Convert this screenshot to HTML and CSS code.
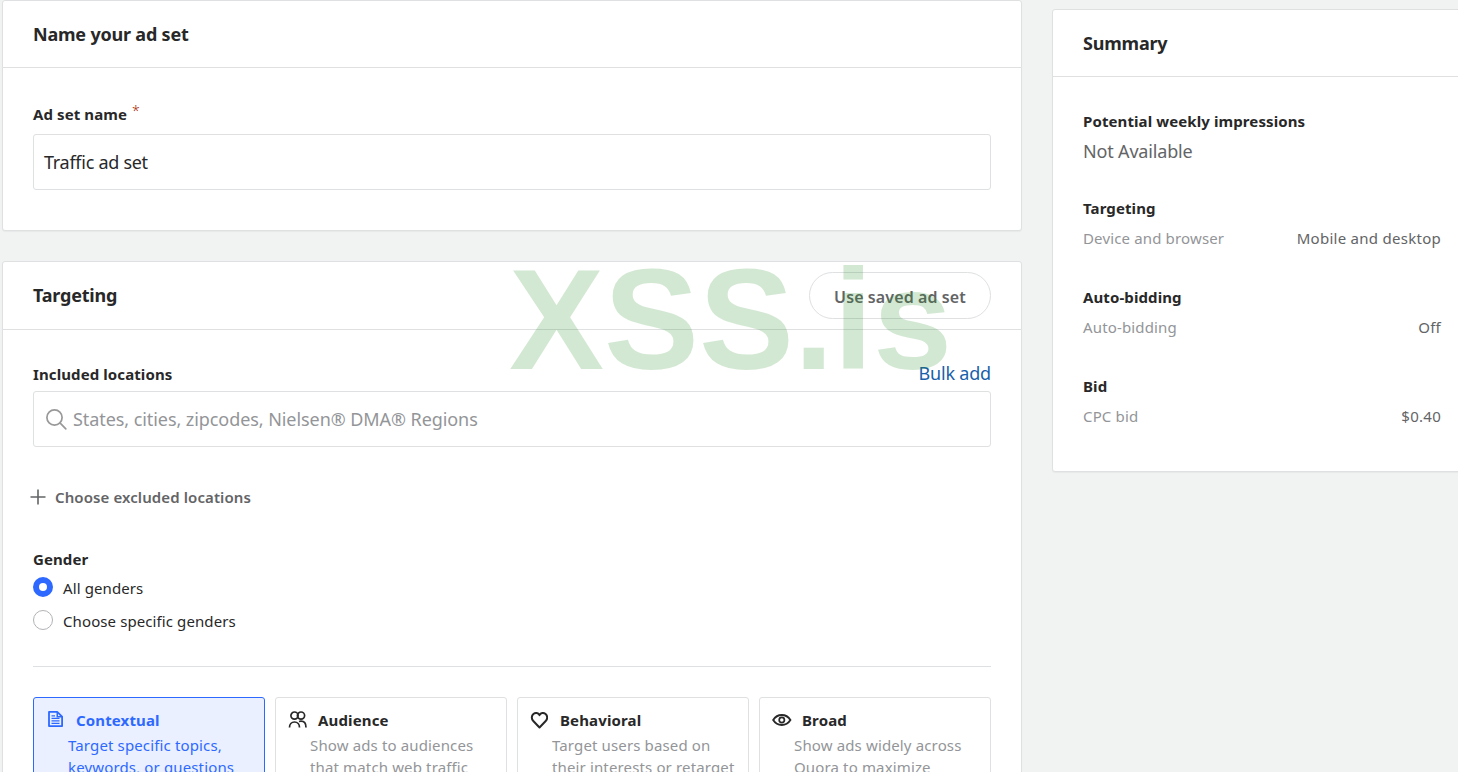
FILE: index.html
```html
<!DOCTYPE html>
<html lang="en">
<head>
<meta charset="utf-8">
<title>Ad set</title>
<link rel="stylesheet" href="styles.css">
</head>
<body>
<div class="page">
  <main class="main">
    <section class="card card-name">
      <header class="card-head"><h2>Name your ad set</h2></header>
      <div class="card-body name-body">
        <div class="label-row"><span class="label">Ad set name</span><span class="req">*</span></div>
        <div class="field"><span class="value">Traffic ad set</span></div>
      </div>
    </section>
    <section class="card card-target">
      <header class="card-head target-head"><h2>Targeting</h2><button class="pill">Use saved ad set</button></header>
      <div class="card-body target-body">
        <div class="label-split"><span class="label">Included locations</span><a class="link">Bulk add</a></div>
        <div class="field">
          <svg class="search" width="24" height="24" viewBox="0 0 24 24" fill="none" stroke="#999" stroke-width="1.7" stroke-linecap="round"><circle cx="10.500" cy="10.500" r="7.600"/><path d="M16.200 16.200l5.600 5.600"/></svg>
          <span class="placeholder">States, cities, zipcodes, Nielsen® DMA® Regions</span>
        </div>
        <div class="exclude">
          <svg width="16" height="16" viewBox="0 0 16 16" stroke="#636466" stroke-width="1.6"><path d="M8 .5v15M.5 8h15"/></svg>
          <span>Choose excluded locations</span>
        </div>
        <div class="label gender-label">Gender</div>
        <div class="radio-row"><span class="radio on"></span><span class="radio-text">All genders</span></div>
        <div class="radio-row"><span class="radio"></span><span class="radio-text">Choose specific genders</span></div>
        <hr class="rule">
        <div class="types">
          <div class="type active">
            <div class="type-head"><svg width="18" height="18" viewBox="0 0 18 18" fill="none" stroke="#2e69ff"><path stroke-width="1.800" stroke-linejoin="round" d="M3 .9h8.200l4.900 4.700v9.500H3z"/><path stroke-width="1.300" d="M5.500 4.800h3.500M5.500 7.300h8M5.500 9.800h8M5.500 12.300h8"/><path fill="#2e69ff" stroke="none" d="M10.500 1h1.500v4h4v1.500h-5.500z"/></svg><span>Contextual</span></div>
            <p>Target specific topics, keywords, or questions</p>
          </div>
          <div class="type">
            <div class="type-head"><svg width="18" height="18" viewBox="0 0 18 18" fill="none" stroke="#282829" stroke-width="1.700" class="icon-out"><circle cx="6.500" cy="4.600" r="3.600"/><circle cx="13" cy="4.600" r="3.600"/><path d="M1.500 16.500c0-3 2-5.500 5-5.500s5 2.500 5 5.500M11 10.500c.7-.2 1.300-.3 2-.3 3 0 5 2.500 5 6.300"/></svg><span>Audience</span></div>
            <p>Show ads to audiences that match web traffic</p>
          </div>
          <div class="type">
            <div class="type-head"><svg width="18" height="18" viewBox="0 0 18 18" fill="none" stroke="#282829" stroke-width="2"><path stroke-linejoin="round" d="M9.500 16.500 3.300 10C1.200 7.900 1.400 4.700 3.400 3c2-1.600 4.800-1.200 6.100 1.100C10.800 1.800 13.600 1.400 15.600 3c2 1.700 2.200 4.900.1 7z"/></svg><span>Behavioral</span></div>
            <p>Target users based on their interests or retarget</p>
          </div>
          <div class="type">
            <div class="type-head tight"><svg width="20" height="18" viewBox="0 0 20 18" fill="none" stroke="#282829" stroke-width="1.900"><path d="M1.200 9C3.200 5.800 6.200 4 9.800 4s6.600 1.800 8.600 5c-2 3.200-5 5-8.600 5S3.200 12.200 1.200 9z"/><circle cx="9.800" cy="9" r="2.600" stroke-width="1.700"/></svg><span>Broad</span></div>
            <p>Show ads widely across Quora to maximize</p>
          </div>
        </div>
      </div>
    </section>
  </main>
  <aside class="card summary">
    <header class="card-head"><h2>Summary</h2></header>
    <div class="summary-body">
      <div class="sum-group first">
        <div class="label">Potential weekly impressions</div>
        <div class="big">Not Available</div>
      </div>
      <div class="sum-group">
        <div class="label">Targeting</div>
        <div class="sum-row"><span class="key">Device and browser</span><span class="val">Mobile and desktop</span></div>
      </div>
      <div class="sum-group">
        <div class="label">Auto-bidding</div>
        <div class="sum-row"><span class="key">Auto-bidding</span><span class="val">Off</span></div>
      </div>
      <div class="sum-group">
        <div class="label">Bid</div>
        <div class="sum-row"><span class="key">CPC bid</span><span class="val">$0.40</span></div>
      </div>
    </div>
  </aside>
</div>
<div class="watermark">XSS.is</div>
</body>
</html>
```

FILE: styles.css
```css
* { box-sizing: border-box; }
html, body { height: 100%; }
body {
  margin: 0;
  height: 772px;
  overflow: hidden;
  background: #f1f2f2;
  color: #282829;
  font-family: "Noto Sans", "Open Sans", sans-serif;
  font-size: 15px;
  position: relative;
}
.page {
  display: flex;
  gap: 30px;
  padding-left: 2px;
  width: 1480px;
  height: 772px;
  overflow: hidden;
  align-items: flex-start;
}
.main { width: 1020px; flex: none; display: flex; flex-direction: column; gap: 30px; }
.card {
  background: #fff;
  border: 1px solid #dee0e1;
  border-radius: 3px;
  box-shadow: 0 1px 1px rgba(0,0,0,.04);
}
.card-name { height: 231px; }
.card-head {
  height: 67px;
  padding: 0 30px;
  display: flex;
  align-items: center;
  justify-content: space-between;
  border-bottom: 1px solid #dee0e1;
}
.card-head h2 { margin: 0; font-size: 18px; font-weight: 700; letter-spacing: -.2px; }
.name-body { padding: 36px 30px 0; }
.label-row { display: flex; height: 30px; }
.label { font-size: 15px; font-weight: 700; letter-spacing: .1px; line-height: 20px; }
.req { color: #a82400; margin-left: 5px; line-height: 14px; font-size: 14px; font-weight: 300; }
.field {
  width: 958px;
  height: 56px;
  border: 1px solid #dee0e1;
  border-radius: 3px;
  padding: 0 10px;
  display: flex;
  align-items: center;
  gap: 5px;
  font-size: 18px;
}
.value { letter-spacing: -.28px; }
.card-target { height: 700px; }
.target-head { height: 68px; }
.target-head h2 { margin-bottom: 2px; }
.pill {
  font: 600 16px "Noto Sans", sans-serif;
  letter-spacing: .1px;
  color: #636466;
  background: #fff;
  border: 1px solid #dee0e1;
  border-radius: 24px;
  width: 182px;
  height: 47px;
  padding: 2px 0 0;
}
.target-body { padding: 33px 30px 0; }
.label-split { display: flex; justify-content: space-between; align-items: flex-start; width: 958px; height: 28px; }
.label-split .label { padding-top: 1px; }
.link { color: #195faa; font-size: 18px; letter-spacing: -.2px; line-height: 20px; }
.placeholder { color: #939598; letter-spacing: -.07px; }
.exclude { display: flex; align-items: center; gap: 9px; margin: 38px 0 0 -3px; height: 24px; font-weight: 600; color: #636466; letter-spacing: .1px; }
.gender-label { margin: 40px 0 1px; }
.radio-row { display: flex; align-items: center; gap: 10px; height: 33px; letter-spacing: .1px; }
.radio-text { padding-top: 2px; }
.radio { width: 20px; height: 20px; border-radius: 50%; border: 1px solid #b1b3b6; }
.radio.on { border: 6px solid #2e69ff; }
.rule { width: 958px; border: 0; border-top: 1px solid #dee0e1; margin: 30px 0 30px; }
.types { display: grid; grid-template-columns: repeat(4, 232px); gap: 10px; }
.type { height: 160px; border: 1px solid #dee0e1; border-radius: 3px; padding: 11px 12px; }
.type.active { background: #eaf0ff; border-color: #2e69ff; color: #2e69ff; }
.type-head { display: flex; align-items: center; gap: 12px; font-weight: 700; letter-spacing: .14px; height: 22px; }
.type-head.tight { gap: 10px; }
.icon-out { overflow: visible; }
.type p { margin: 3px 0 0 22px; line-height: 22px; color: #939598; letter-spacing: .14px; }
.type.active p { color: #2e69ff; }
.summary { width: 440px; height: 463px; flex: none; margin-top: 9px; }
.summary-body { padding: 34px 0 0 30px; width: 388px; }
.sum-group { margin-bottom: 38px; }
.sum-group.first { margin-bottom: 34px; }
.big { font-size: 18px; color: #636466; margin-top: 7px; letter-spacing: -.17px; line-height: 26px; }
.sum-row { display: flex; justify-content: space-between; margin-top: 9px; line-height: 22px; }
.key { color: #939598; letter-spacing: .15px; }
.val { color: #636466; letter-spacing: .27px; }
.watermark {
  position: absolute;
  left: 509px;
  top: 240px;
  font: 700 142.400px/160px "Liberation Sans", sans-serif;
  color: rgba(34,139,34,.2);
  pointer-events: none;
}
```
